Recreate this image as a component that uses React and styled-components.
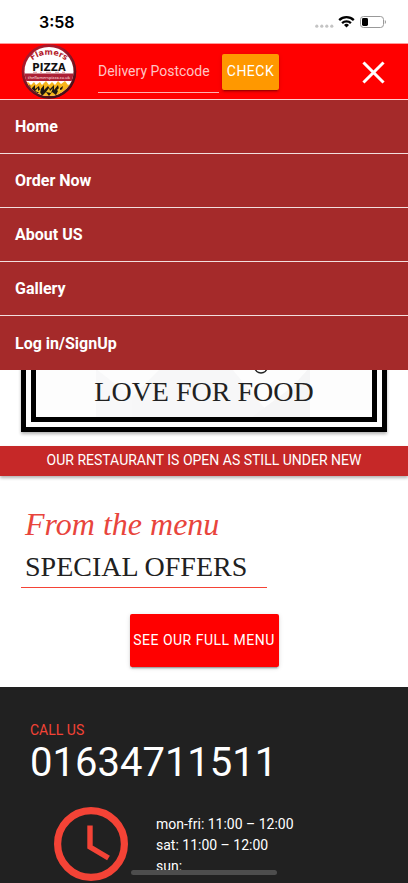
import React from "react";
import styled, { createGlobalStyle } from "styled-components";

const GlobalStyle = createGlobalStyle`
  *, *::before, *::after { box-sizing: border-box; }
  body {
    margin: 0;
    background: #fff;
    color: #212121;
    font-family: Roboto, "Liberation Sans", sans-serif;
    font-size: 14px;
  }
  h1, h2, p, ul { margin: 0; padding: 0; font-weight: 400; }
  a { color: inherit; text-decoration: none; }
  button { font: inherit; border: 0; padding: 0; cursor: pointer; }
`;

const Page = styled.div`
  display: flex;
  flex-direction: column;
  min-height: 100vh;
  overflow: hidden;
`;

const StatusBar = styled.div`
  display: flex;
  align-items: center;
  justify-content: space-between;
  height: 43px;
  padding: 1px 21px 0 39px;
  color: #000;
`;

const Time = styled.span`
  font-family: Inter, Roboto, sans-serif;
  font-size: 16px;
  font-weight: 600;
`;

const Header = styled.header`
  position: relative;
  z-index: 2;
  display: flex;
  align-items: center;
  height: 57px;
  padding: 0 22px 0 21px;
  background: #f00;
  border-top: 1px solid #ff9a9a;
  border-bottom: 1px solid #ffd0d0;
`;

const LogoLink = styled.a`
  display: block;
  width: 56px;
  height: 55px;
`;

const PostcodeForm = styled.form`
  display: flex;
  align-items: center;
  flex: 1;
  gap: 3px;
  margin-left: 21px;
`;

const PostcodeInput = styled.input`
  width: 121px;
  height: 43px;
  padding: 0 0 1px;
  border: 0;
  border-bottom: 1px solid #ffb0b0;
  border-radius: 0;
  outline: 0;
  background: transparent;
  color: #fff;
  font: inherit;
  &::placeholder { color: #ffc4c4; opacity: 1; }
`;

const RaisedButton = styled.button`
  color: #fff;
  letter-spacing: 0.5px;
  border-radius: 2px;
  background: ${(p) => p.$color};
  box-shadow: 0 2px 2px rgba(0, 0, 0, 0.14), 0 1px 5px rgba(0, 0, 0, 0.12),
    0 3px 1px -2px rgba(0, 0, 0, 0.2);
`;

const CheckButton = styled(RaisedButton)`
  width: 57px;
  height: 36px;
  padding-bottom: 1px;
`;

const CloseButton = styled.button`
  display: flex;
  background: none;
`;

const Menu = styled.nav`
  position: absolute;
  top: 56px;
  left: 0;
  right: 0;
  background: #a52a2a;
`;

const MenuItem = styled.a`
  display: flex;
  align-items: center;
  height: 54px;
  padding: 0 15px;
  color: #fff;
  font-size: 16px;
  font-weight: 700;
  &:not(:last-child) { border-bottom: 1px solid #f3dede; }
`;

const Hero = styled.section`
  padding: 56px 21px 14px;
`;

const Banner = styled.div`
  display: flex;
  flex-direction: column;
  justify-content: flex-end;
  position: relative;
  height: 276px;
  border: 15px double #000;
  padding-bottom: 5px;
  text-align: center;
  background: #fdfdfd;
  box-shadow: 0 2px 3px rgba(0, 0, 0, 0.3);
`;

const Facets = styled.svg`
  position: absolute;
  inset: 0;
  width: 100%;
  height: 100%;
`;

const Script = styled.p`
  font-family: "Brush Script MT", "Liberation Serif", cursive;
  font-style: italic;
  font-size: 32px;
  line-height: 40px;
  color: #e8453c;
`;

const Display = styled.h1`
  position: relative;
  font-family: "Liberation Serif", serif;
  font-size: 28px;
  line-height: 40px;
  color: #212121;
  white-space: nowrap;
`;

const Notice = styled.p`
  height: 30px;
  line-height: 29px;
  text-align: center;
  color: #fff;
  background: #c62828;
  box-shadow: 0 2px 3px rgba(0, 0, 0, 0.3);
`;

const Offers = styled.section`
  display: flex;
  flex-direction: column;
  align-items: flex-start;
  padding: 28px 21px 20px;
`;

const OffersTitle = styled.div`
  padding: 0 20px 0 4px;
  border-bottom: 1px solid #f44336;
`;

const OffersHeading = styled(Display)`
  margin-top: 3px;
`;

const MenuButton = styled(RaisedButton)`
  align-self: center;
  width: 149px;
  height: 53px;
  margin-top: 26px;
  padding-bottom: 2px;
  white-space: nowrap;
`;

const Footer = styled.footer`
  flex: 1;
  padding: 34px 30px 0;
  color: #fff;
  background: #212121;
`;

const CallLabel = styled.p`
  line-height: 18px;
  color: #f44336;
`;

const Phone = styled.a`
  display: block;
  font-size: 40px;
  line-height: 48px;
`;

const Opening = styled.div`
  display: flex;
  gap: 28px;
  margin-top: 20px;
  padding-left: 24px;
`;

const Hours = styled.ul`
  padding-top: 7px;
  list-style: none;
  line-height: 21px;
`;

const HomeIndicator = styled.div`
  position: fixed;
  bottom: 8px;
  left: 50%;
  width: 146px;
  height: 5px;
  border-radius: 3px;
  background: #4d4d4d;
  transform: translateX(-50%);
`;

const links = ["Home", "Order Now", "About US", "Gallery", "Log in/SignUp"];
const hours = ["mon-fri: 11:00 – 12:00", "sat: 11:00 – 12:00", "sun:"];

function StatusIcons() {
  return (
    <svg width="72" height="16" viewBox="0 0 72 16" aria-hidden="true">
      <g fill="#c4c4c4">
        <circle cx="1.8" cy="12.2" r="1.6" />
        <circle cx="6.8" cy="12.2" r="1.6" />
        <circle cx="11.8" cy="12.2" r="1.6" />
        <circle cx="16.8" cy="12.2" r="1.6" />
      </g>
      <g fill="none" stroke="#000" strokeWidth="2.3">
        <path d="M24.2 6.1a10.4 10.4 0 0 1 14.6 0" />
        <path d="M27.1 9.1a6.3 6.3 0 0 1 8.8 0" />
      </g>
      <path d="M31.5 13.4l-2.5-2.5a3.6 3.6 0 0 1 5 0z" fill="#000" />
      <rect x="45.5" y="2.5" width="23" height="11" rx="3" fill="none" stroke="#999" />
      <rect x="47" y="4" width="6" height="8" rx="1.4" />
      <path d="M69.8 6v4c1.6-.6 1.6-3.4 0-4z" fill="#999" />
    </svg>
  );
}

function Logo() {
  return (
    <svg width="56" height="55" viewBox="0 0 56 55" role="img" aria-label="Flamers Pizza">
      <defs>
        <radialGradient id="rim" cx="45%" cy="40%" r="60%">
          <stop offset="0.7" stopColor="#a8182a" />
          <stop offset="1" stopColor="#3c1018" />
        </radialGradient>
        <clipPath id="disc"><circle cx="28" cy="27.5" r="24.5" /></clipPath>
        <path id="arc" d="M8 20A26 26 0 0 1 48 20" />
      </defs>
      <circle cx="28" cy="27.5" r="27.3" fill="url(#rim)" />
      <g clipPath="url(#disc)">
        <rect width="56" height="55" fill="#fff" />
        <rect y="29.5" width="56" height="7.5" fill="#ac2035" />
        <path d="M3 40l4-2 3 3 3-3 2 3 4-3 2 3 4-4 3 4 3-3 3 3 3-4 3 3 4-3 3 4 4-2v4l-4 3-3 3-5 3-4 2H20l-6-3-6-5z" fill="#f7b51c" />
        <path d="M6 44l3-3 1 4 4-4 0 4 4-3 1 4 4-5 0 5 4-4 2 3 4-4 0 5 4-5 1 4 4-3-1 4-4 1-2 4-4-3-3 4-3-4-4 4-2-4-5 3-2-4-4 1-1-4z" fill="#1d1712" />
        <path d="M14 47l3-3 0 3 3-2-1 4zM25 48l3-4 1 3 3-3-2 5zM36 46l3-3 0 3 3-1-3 4z" fill="#f2c22b" />
      </g>
      <path d="M12 28.4h4m3 0h2m4 0h5m4 0h4m3 0h3" stroke="#e3aab0" strokeWidth="1.2" />
      <text fill="#b51f2e" fontFamily="DejaVu Sans, sans-serif" fontSize="8" fontWeight="700">
        <textPath href="#arc" startOffset="50%" textAnchor="middle">Flamers</textPath>
      </text>
      <text x="28" y="27" textAnchor="middle" fill="#111" fontFamily="DejaVu Sans, sans-serif" fontSize="10" fontWeight="700">PIZZA</text>
      <text x="28" y="34.5" textAnchor="middle" fill="#f3c9ce" fontFamily="Open Sans, sans-serif" fontSize="4" fontWeight="600">theflamerspizza.co.uk</text>
    </svg>
  );
}

function CloseIcon() {
  return (
    <svg width="24" height="24" viewBox="0 0 24 24" aria-hidden="true">
      <path d="M2.5 3.5l18 18M20.5 3.5L2.5 21.5" stroke="#fff" strokeWidth="3" strokeLinecap="square" />
    </svg>
  );
}

function ClockIcon() {
  return (
    <svg width="74" height="74" viewBox="0 0 74 74" fill="none" stroke="#f44336" aria-hidden="true">
      <circle cx="37" cy="37" r="33.4" strokeWidth="7.2" />
      <path d="M36 18.5V40l18.5 11" strokeWidth="5.4" />
    </svg>
  );
}

export default function App() {
  return (
    <Page>
      <GlobalStyle />
      <StatusBar>
        <Time>3:58</Time>
        <StatusIcons />
      </StatusBar>
      <Header>
        <LogoLink href="#home"><Logo /></LogoLink>
        <PostcodeForm onSubmit={(e) => e.preventDefault()}>
          <PostcodeInput aria-label="Delivery Postcode" placeholder="Delivery Postcode" />
          <CheckButton $color="#ff9800" type="submit">CHECK</CheckButton>
        </PostcodeForm>
        <CloseButton type="button" aria-label="Close menu"><CloseIcon /></CloseButton>
        <Menu>
          {links.map((label) => (
            <MenuItem key={label} href="#menu">{label}</MenuItem>
          ))}
        </Menu>
      </Header>
      <main>
        <Hero>
          <Banner>
            <Facets viewBox="0 0 336 246" preserveAspectRatio="none" aria-hidden="true">
              <path d="M60 198l36 28 28-20v40H60z" fill="#f8f8f9" />
              <path d="M96 226l40-40h50l50 60H96z" fill="#f7f7f8" />
              <path d="M216 246l40-30 18-20v50z" fill="#f5f5f6" />
              <path
                d="M219 196c0 8 12 8 12 0"
                fill="none"
                stroke="#212121"
                strokeWidth="1.6"
              />
            </Facets>
            <Display>LOVE FOR FOOD</Display>
          </Banner>
        </Hero>
        <Notice>OUR RESTAURANT IS OPEN AS STILL UNDER NEW</Notice>
        <Offers>
          <OffersTitle>
            <Script>From the menu</Script>
            <OffersHeading as="h2">SPECIAL OFFERS</OffersHeading>
          </OffersTitle>
          <MenuButton $color="#f00" type="button">SEE OUR FULL MENU</MenuButton>
        </Offers>
      </main>
      <Footer>
        <CallLabel>CALL US</CallLabel>
        <Phone href="tel:01634711511">01634711511</Phone>
        <Opening>
          <ClockIcon />
          <Hours>
            {hours.map((line) => <li key={line}>{line}</li>)}
          </Hours>
        </Opening>
      </Footer>
      <HomeIndicator />
    </Page>
  );
}
